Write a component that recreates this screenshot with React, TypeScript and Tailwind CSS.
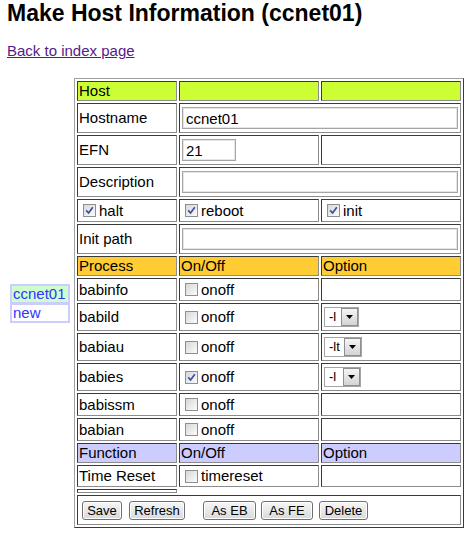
import React from 'react';

const cellBorder =
  'border border-t-[#3a3a3a] border-l-[#3a3a3a] border-b-[#8c8c8c] border-r-[#8c8c8c] p-[1px] flex items-center';

type CellProps = { children?: React.ReactNode; className?: string };

const Cell: React.FC<CellProps> = ({ children, className = '' }) => (
  <div className={`${cellBorder} ${className}`}>{children}</div>
);

const Check: React.FC<{ checked?: boolean; label: string }> = ({ checked, label }) => (
  <div className="flex items-center">
    <span className="ml-[4px] mr-[3px] w-[13px] h-[13px] shrink-0 border border-[#8e8f8f] bg-linear-to-br from-[#d8d8d8] to-[#fbfbfb] flex items-center justify-center">
      {checked && (
        <svg width="9" height="9" viewBox="0 0 9 9">
          <path d="M1.2 4.4 L3.6 7 L7.8 1.2" stroke="#3b4fa0" strokeWidth="1.7" fill="none" />
        </svg>
      )}
    </span>
    <span>{label}</span>
  </div>
);

const Select: React.FC<{ value: string; className: string }> = ({ value, className }) => (
  <div className={`ml-[1px] h-[20px] border border-[#a5a5a5] bg-white flex items-stretch ${className}`}>
    <span className="flex-1 pl-[4px] text-[13px] leading-[18px]">{value}</span>
    <span className="w-[17px] border border-[#8f8f8f] bg-linear-to-b from-[#f5f5f5] to-[#d4d4d4] flex items-center justify-center">
      <svg width="7" height="4" viewBox="0 0 7 4">
        <path d="M0 0 H7 L3.5 4 Z" fill="#000" />
      </svg>
    </span>
  </div>
);

const TextInput: React.FC<{ value?: string; className: string }> = ({ value = '', className }) => (
  <input
    defaultValue={value}
    className={`ml-[1px] h-[22px] border border-[#a5a5a5] shadow-[inset_0_0_0_1px_#e6e6e6] px-[3px] text-[15px] bg-white outline-none ${className}`}
  />
);

const Btn: React.FC<{ label: string; className: string }> = ({ label, className }) => (
  <button className={`h-[19px] text-[13px] leading-none border border-[#707070] rounded-[3px] bg-linear-to-b from-[#f7f7f7] to-[#d9d9d9] shadow-[inset_0_0_0_1px_#ffffff] text-black ${className}`}>
    {label}
  </button>
);

const processes: Array<{ name: string; checked: boolean; option?: { value: string; className: string } }> = [
  { name: 'babinfo', checked: false },
  { name: 'babild', checked: false, option: { value: '-l', className: 'w-[35px]' } },
  { name: 'babiau', checked: false, option: { value: '-lt', className: 'w-[38px]' } },
  { name: 'babies', checked: true, option: { value: '-l', className: 'w-[37px]' } },
  { name: 'babissm', checked: false },
  { name: 'babian', checked: false },
];

export default function App() {
  return (
    <div className="min-h-screen bg-white text-black pl-[7px] font-['Liberation_Sans',Arial,sans-serif] text-[15px] leading-[18px]">
      <h1 className="text-[23px] font-bold leading-[27px]">Make Host Information (ccnet01)</h1>
      <a href="#" className="block w-fit mt-[15px] text-[#551a8b] underline">
        Back to index page
      </a>

      <div className="flex items-center mt-[18px]">
        <div className="ml-[3px] w-[60px] bg-[#ccccff] p-[2px] flex flex-col gap-[3px] text-[#3333ff] leading-[16px]">
          <div className="bg-[#ccffcc] px-[1px]">ccnet01</div>
          <div className="bg-white px-[1px]">new</div>
        </div>

        <div className="ml-[4px] border border-t-[#a0a0a0] border-l-[#a0a0a0] border-b-[#3a3a3a] border-r-[#3a3a3a] p-[2px] grid grid-cols-[100px_140px_140px] grid-rows-[20px_30px_30px_30px_23px_30px_20px_23px_28px_28px_28px_23px_23px_20px_22px_4px_30px] gap-[2px]">
          <Cell className="bg-[#ccff33]">Host</Cell>
          <Cell className="bg-[#ccff33]" />
          <Cell className="bg-[#ccff33]" />

          <Cell>Hostname</Cell>
          <Cell className="col-span-2">
            <TextInput value="ccnet01" className="w-[276px]" />
          </Cell>

          <Cell>EFN</Cell>
          <Cell>
            <TextInput value="21" className="w-[54px]" />
          </Cell>
          <Cell />

          <Cell>Description</Cell>
          <Cell className="col-span-2">
            <TextInput className="w-[276px]" />
          </Cell>

          <Cell>
            <Check checked label="halt" />
          </Cell>
          <Cell>
            <Check checked label="reboot" />
          </Cell>
          <Cell>
            <Check checked label="init" />
          </Cell>

          <Cell>Init path</Cell>
          <Cell className="col-span-2">
            <TextInput className="w-[276px]" />
          </Cell>

          <Cell className="bg-[#ffcc33]">Process</Cell>
          <Cell className="bg-[#ffcc33]">On/Off</Cell>
          <Cell className="bg-[#ffcc33]">Option</Cell>

          {processes.map((p) => (
            <React.Fragment key={p.name}>
              <Cell>{p.name}</Cell>
              <Cell>
                <Check checked={p.checked} label="onoff" />
              </Cell>
              <Cell>{p.option && <Select value={p.option.value} className={p.option.className} />}</Cell>
            </React.Fragment>
          ))}

          <Cell className="bg-[#ccccff]">Function</Cell>
          <Cell className="bg-[#ccccff]">On/Off</Cell>
          <Cell className="bg-[#ccccff]">Option</Cell>

          <Cell>Time Reset</Cell>
          <Cell>
            <Check label="timereset" />
          </Cell>
          <Cell />

          <Cell />
          <div className="col-span-2" />

          <Cell className="col-span-3">
            <Btn label="Save" className="ml-[3px] w-[40px]" />
            <Btn label="Refresh" className="ml-[7px] w-[56px]" />
            <Btn label="As EB" className="ml-[18px] w-[53px]" />
            <Btn label="As FE" className="ml-[5px] w-[52px]" />
            <Btn label="Delete" className="ml-[6px] w-[49px]" />
          </Cell>
        </div>
      </div>
    </div>
  );
}
